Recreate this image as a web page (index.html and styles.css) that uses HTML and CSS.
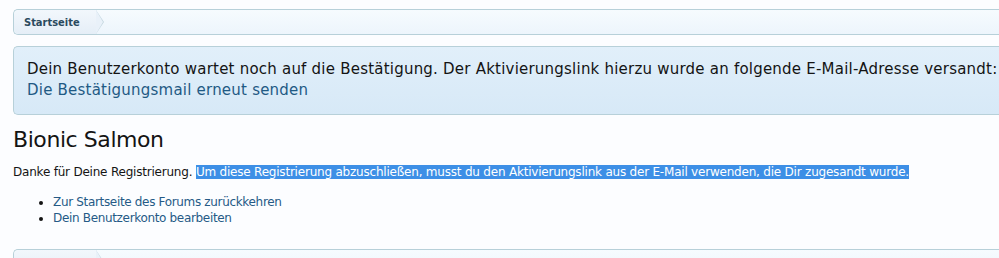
FILE: index.html
```html
<!DOCTYPE html>
<html lang="de">
<head>
<meta charset="utf-8">
<title>Bionic Salmon</title>
<link rel="stylesheet" href="styles.css">
</head>
<body>
<div class="page">
  <nav class="breadcrumb">
    <a class="crumb" href="#">Startseite</a>
  </nav>
  <div class="notice">
    <div class="notice-text">Dein Benutzerkonto wartet noch auf die Bestätigung. Der Aktivierungslink hierzu wurde an folgende E-Mail-Adresse versandt:</div>
    <a class="notice-link" href="#">Die Bestätigungsmail erneut senden</a>
  </div>
  <h1 class="title">Bionic Salmon</h1>
  <p class="intro">Danke für Deine Registrierung. <span class="sel">Um diese Registrierung abzuschließen, musst du den Aktivierungslink aus der E-Mail verwenden, die Dir zugesandt wurde.</span></p>
  <ul class="links">
    <li><a href="#">Zur Startseite des Forums zurückkehren</a></li>
    <li><a href="#">Dein Benutzerkonto bearbeiten</a></li>
  </ul>
  <nav class="breadcrumb bottom">
    <a class="crumb empty" href="#" aria-label="Startseite"></a>
  </nav>
</div>
</body>
</html>
```
FILE: styles.css
```css
html, body {
  margin: 0;
  padding: 0;
  overflow: hidden;
  background: #fcfdff;
}
body {
  font-family: "DejaVu Sans", sans-serif;
  color: #141414;
}
.page {
  width: 1200px;
  height: 258px;
  overflow: hidden;
  padding: 9px 0 0 13px;
  box-sizing: border-box;
}
.breadcrumb {
  height: 24px;
  border: 1px solid #b7d0d9;
  border-right: none;
  border-radius: 5px 0 0 5px;
  background: linear-gradient(#f6fbfe, #edf5fc);
  display: flex;
  align-items: stretch;
}
.crumb {
  position: relative;
  display: flex;
  align-items: center;
  padding: 0 16px 0 10px;
  font-family: "DejaVu Sans Condensed", "DejaVu Sans", sans-serif;
  font-size: 11px;
  font-weight: bold;
  color: #2a4a5e;
  text-decoration: none;
  background: linear-gradient(#f2f7fc, #e5eef7);
  border-radius: 5px 0 0 5px;
}
.crumb.empty {
  width: 56px;
  padding: 0 16px 0 10px;
}
.crumb::after {
  content: "";
  position: absolute;
  right: -8px;
  top: 0;
  width: 0;
  height: 0;
  border-top: 12px solid transparent;
  border-bottom: 12px solid transparent;
  border-left: 8px solid #c3d6df;
}
.crumb::before {
  content: "";
  position: absolute;
  right: -7px;
  top: 0;
  width: 0;
  height: 0;
  border-top: 12px solid transparent;
  border-bottom: 12px solid transparent;
  border-left: 7px solid #e9f1f9;
  z-index: 1;
}
.notice {
  margin-top: 11px;
  height: 69px;
  box-sizing: border-box;
  border: 1px solid #b7d0d9;
  border-right: none;
  border-radius: 5px 0 0 5px;
  background: linear-gradient(#e1effa, #d7e9f7);
  padding: 12px 13px;
  font-size: 15px;
  line-height: 21px;
  letter-spacing: 0.22px;
}
.notice-text {
  white-space: nowrap;
  color: #141414;
}
.notice-link {
  color: #1f5a84;
  text-decoration: none;
}
.title {
  margin: 11px 0 0;
  font-size: 22px;
  font-weight: normal;
  line-height: 28px;
  letter-spacing: -0.43px;
  color: #141414;
}
.intro {
  margin: 10px 0 0;
  font-size: 12px;
  line-height: 16px;
  letter-spacing: -0.21px;
}
.sel {
  background: #3d8fe6;
  color: #fff;
}
.links {
  margin: 14px 0 0;
  padding-left: 40px;
  font-size: 12px;
  line-height: 16px;
  letter-spacing: -0.33px;
}
.links a {
  color: #255a86;
  text-decoration: none;
}
.bottom {
  margin-top: 23px;
}
```
